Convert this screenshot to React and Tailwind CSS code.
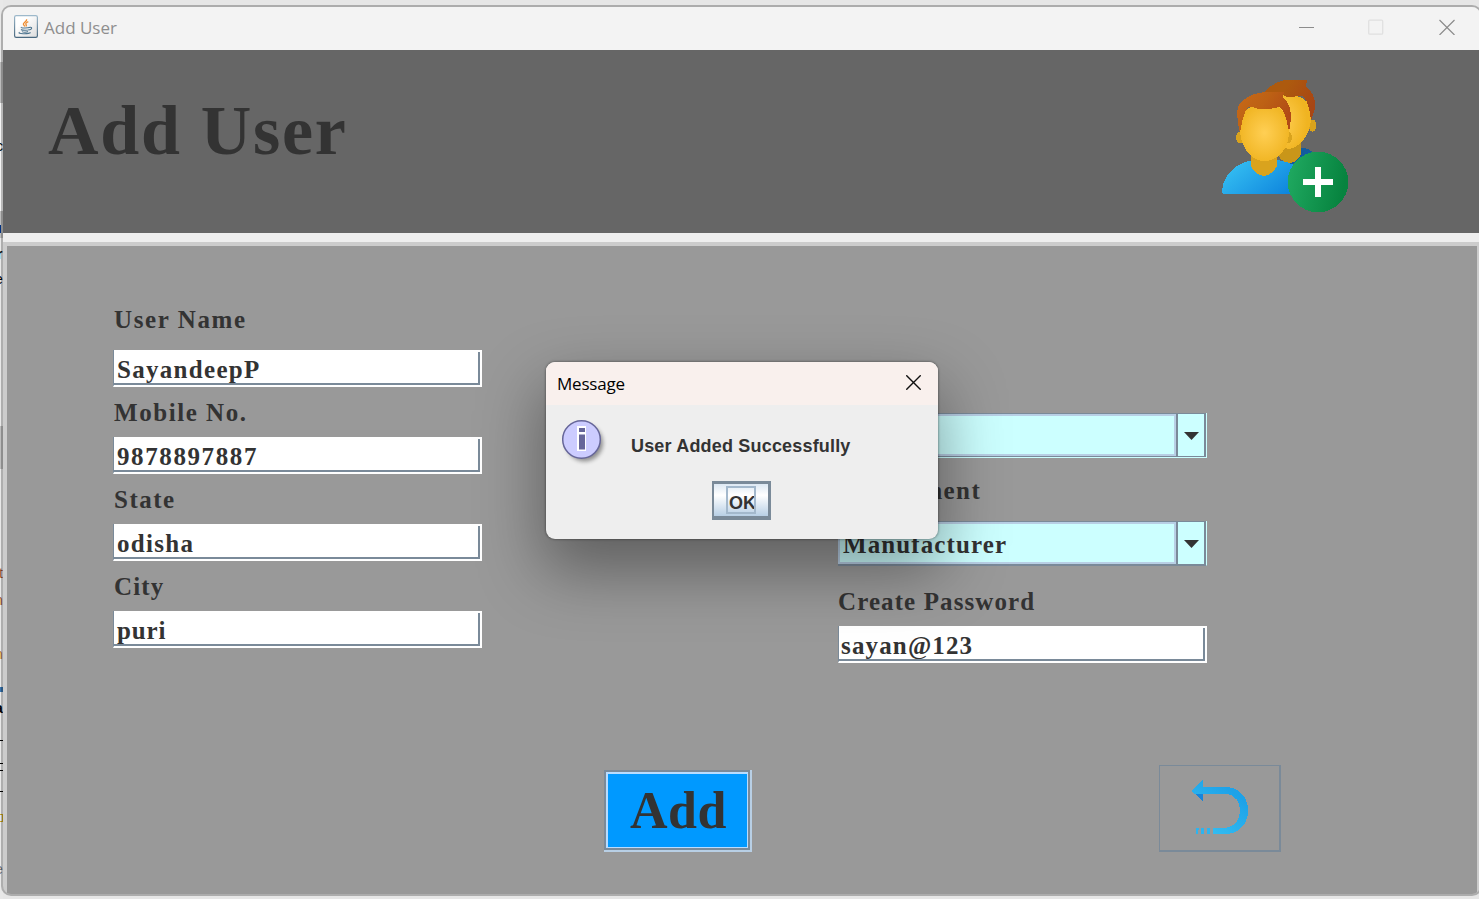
import React from "react";

function JavaIcon() {
  return (
    <svg width="24" height="23" viewBox="0 0 24 23" fill="none">
      <defs>
        <linearGradient id="jb" x1="0" y1="0" x2="0" y2="1">
          <stop offset="0" stopColor="#9db9cb" />
          <stop offset="1" stopColor="#4a6980" />
        </linearGradient>
        <linearGradient id="jf" x1="0" y1="0" x2="1" y2="1">
          <stop offset="0.3" stopColor="#ffffff" />
          <stop offset="1" stopColor="#dcdcdc" />
        </linearGradient>
      </defs>
      <rect x="0.6" y="0.6" width="22.8" height="21.8" rx="1.6" fill="url(#jf)" stroke="url(#jb)" strokeWidth="1.2" />
      <path d="M12.6 4.2c.8 2-3.2 3.200-3.200 4.900 0 1 1.200 1.600 1.600 2.500M14.300 6.700c-1.700.7-2.900 1.500-2.400 2.600.3.800.9 1.100.1 2.100" stroke="#ee8a2c" strokeWidth="1.3" />
      <path d="M7.500 12.300c-2 .7 6.500 1 8.400 0M7 14.500c1 1 7 1 8.300.1M8 16.600c1.200.8 4.600.8 6 0M15.700 12.400c3-.6 2.200 2.200-.4 2.500M5.600 17.300c-3.200 1.600 8.900 2.100 11 .2" stroke="#4f7690" strokeWidth="1.1" />
    </svg>
  );
}

function UsersIcon() {
  return (
    <svg width="128" height="134" viewBox="0 0 128 134" shapeRendering="crispEdges">
      <defs>
        <radialGradient id="face" cx="0.5" cy="0.5" r="0.55">
          <stop offset="0" stopColor="#ffcf54" />
          <stop offset="1" stopColor="#f0b421" />
        </radialGradient>
        <radialGradient id="face2" cx="0.3" cy="0.5" r="0.6">
          <stop offset="0" stopColor="#ffcf54" />
          <stop offset="1" stopColor="#f0b421" />
        </radialGradient>
        <linearGradient id="hair" x1="0" y1="0" x2="1" y2="0.5">
          <stop offset="0" stopColor="#c76918" />
          <stop offset="0.5" stopColor="#bd6114" />
          <stop offset="1" stopColor="#b14a16" />
        </linearGradient>
        <linearGradient id="hair2" x1="0" y1="0" x2="1" y2="0.5">
          <stop offset="0.4" stopColor="#ad5a0e" />
          <stop offset="1" stopColor="#a84614" />
        </linearGradient>
        <linearGradient id="shirt" x1="0" y1="0.3" x2="1" y2="0.8">
          <stop offset="0" stopColor="#35bff2" />
          <stop offset="1" stopColor="#0b80db" />
        </linearGradient>
        <linearGradient id="plus" x1="0" y1="0" x2="1" y2="0.2">
          <stop offset="0" stopColor="#21ab62" />
          <stop offset="1" stopColor="#07833f" />
        </linearGradient>
      </defs>
      <path d="M68 72C76 64 86 68 92 73L96 80L80 100H66Z" fill="#125b9e" />
      <path d="M56 60h23v14c-2 6-7 9-12 9-7-1-11-6-12-11Z" fill="#c99619" />
      <ellipse cx="90.500" cy="45.500" rx="4" ry="6" fill="#d9a31d" />
      <path d="M47 20C53 10 84 12 89 28C91 48 83 66 67 69C52 68 45 44 47 20Z" fill="url(#face2)" />
      <path d="M43 12C47 5 56 2 62 0H85L84 6C90 11 94 19 93 29L89 41C88 30 85 17 79 15.500C71 17 65 18 61 15Z" fill="url(#hair2)" />
      <path d="M0 110C2 92 17 82 31 80H56C66 82 77 85 82 94L80 114H2C0 114 0 112 0 110Z" fill="url(#shirt)" />
      <path d="M29 72H55V86C52 92 48 95 42 96C35 95 31 91 29 86Z" fill="#d9a31e" />
      <ellipse cx="18" cy="57.500" rx="4" ry="6" fill="#d9a31d" />
      <ellipse cx="66" cy="57.500" rx="4" ry="6" fill="#d9a31d" />
      <path d="M18 45C20 31 27 23 42 25C57 22 65 32 67 49C68 67 57 81 42 81C27 81 17 64 18 45Z" fill="url(#face)" />
      <path d="M18 53C15 43 14 30 17 24C22 18 29 16 32 14L42 12H62L61 17C68 23 69 32 69 39L67 52C65 41 62 28 57 27C51 29 37 31 31 27L26 27C21 34 20 42 18 53Z" fill="url(#hair)" />
      <circle cx="96" cy="102" r="30.300" fill="url(#plus)" />
      <path d="M93 87h6v12h12v6H99v12h-6v-12H81v-6h12Z" fill="#fff" />
    </svg>
  );
}

function BackIcon() {
  return (
    <svg width="58" height="56" viewBox="0 0 58 56" shapeRendering="crispEdges">
      <defs>
        <linearGradient id="bk" gradientUnits="userSpaceOnUse" x1="10" y1="52" x2="40" y2="12">
          <stop offset="0" stopColor="#35bff2" />
          <stop offset="1" stopColor="#1ea2e8" />
        </linearGradient>
      </defs>
      <path d="M5 15H12V23Z" fill="#1585dc" />
      <path d="M0 12L12 0V8H36C49 9 57 19 57 31.500C57 44 49 54 36 55H22V48.500H36C44 47 49 41 49 31.500C49 23 44 16 36 15H4Z" fill="url(#bk)" />
      <path d="M5 48.500h3v2h-1v4.500H5ZM10 48.500h3V55h-3ZM16 48.500h3V55h-3Z" fill="#2cb4ef" />
    </svg>
  );
}

function InfoIcon() {
  return (
    <svg width="48" height="48" viewBox="0 0 48 48">
      <defs>
        <filter id="soft" x="-20%" y="-20%" width="150%" height="150%">
          <feGaussianBlur stdDeviation="2" />
        </filter>
      </defs>
      <circle cx="23.500" cy="24" r="18.500" fill="#000" opacity="0.4" filter="url(#soft)" />
      <circle cx="20.500" cy="20.500" r="18.800" fill="#ccccff" stroke="#666699" strokeWidth="1.500" />
      <path d="M16 7h9v25h-9Z" fill="#fff" />
      <path d="M18 9h6v4h-6ZM18 15.500h6v15h-6Z" fill="#666699" />
    </svg>
  );
}

function Label({ children, className }) {
  return (
    <div className={"flex items-center whitespace-nowrap text-[25px] leading-none text-[#333] " + className}>
      {children}
    </div>
  );
}

function Field({ children, spacing }) {
  return (
    <div className="h-[37px] w-[369px] border-b-2 border-l border-r-2 border-b-white border-l-[#7a8a99] border-r-white bg-white pt-0.5">
      <div className="flex h-[33px] items-center overflow-hidden border-b-2 border-r-2 border-[#7a8a99] pl-[3px] pt-[3px]">
        <span className={"whitespace-nowrap text-[25px] leading-none text-[#333] " + spacing}>{children}</span>
      </div>
    </div>
  );
}

function Combo({ children, edge }) {
  return (
    <div className={"flex h-[45px] w-[369px] border-b border-r border-r-[#ccffff] " + edge}>
      <div className="flex grow border-b border-r-2 border-t border-[#7a8a99] bg-[#ccffff]">
        <div className="flex grow items-center border-2 border-[#b8cfe5] pl-[3px] pt-[3px] text-[25px] leading-none tracking-[1.100px] text-[#333]">
          {children}
        </div>
        <div className="flex w-[28px] items-center justify-center border-l-2 border-[#7a8a99] pt-px">
          <svg width="15" height="8" viewBox="0 0 15 8">
            <path d="M0 0H15L7.500 8Z" fill="#333" />
          </svg>
        </div>
      </div>
    </div>
  );
}

function Backdrop() {
  return (
    <div className="flex h-full w-[3px] shrink-0 flex-col overflow-hidden bg-[#e8e8e8] font-['Liberation_Sans'] text-[14px] font-normal leading-none">
      <div className="mt-[62px] h-[41px] shrink-0 bg-[#bdbdbd]" />
      <div className="h-[108px] shrink-0 bg-[#f4f4f4] pt-[36px]"><span className="-ml-1 text-black">c</span></div>
      <div className="h-[27px] shrink-0 bg-[#bdbdbd] pt-[14px]"><div className="h-2 w-px bg-[#003080]" /></div>
      <div className="h-[28px] shrink-0 pt-[9px]"><span className="-ml-[3px] font-bold text-black">r</span></div>
      <div className="h-[160px] shrink-0 pt-[6px]"><span className="-ml-[5px] text-black">e</span></div>
      <div className="h-[43px] shrink-0 bg-[#bdbdbd]" />
      <div className="h-[97px] shrink-0" />
      <div className="h-[27px] shrink-0"><span className="-ml-px text-[#a2562e]">t</span></div>
      <div className="h-[54px] shrink-0"><span className="-ml-[5px] text-[#a2562e]">n</span></div>
      <div className="h-[40px] shrink-0"><span className="-ml-[5px] text-[#b8742c]">n</span></div>
      <div className="h-[5px] shrink-0 bg-[#3974ae]" />
      <div className="h-[48px] shrink-0 pt-[9px]"><span className="-ml-[5px] font-bold text-black">a</span></div>
      <div className="h-px shrink-0 bg-black" />
      <div className="mt-[22px] h-px shrink-0 bg-black" />
      <div className="mt-[6px] h-px shrink-0 bg-black" />
      <div className="mt-[20px] h-px shrink-0 bg-black" />
      <div className="mt-[22px] h-[8px] w-[3px] shrink-0 border-y border-r border-[#c9a51e]" />
      <div className="mt-[40px] shrink-0"><span className="-ml-[5px] text-[#777]">e</span></div>
    </div>
  );
}

function MessageDialog() {
  return (
    <div className="absolute left-[546px] top-[362px] h-[177px] w-[392px] rounded-[9px] bg-[#eee] shadow-[0_0_2px_1px_rgba(0,0,0,0.25),0_28px_64px_4px_rgba(0,0,0,0.38)]">
      <div className="flex h-[43px] items-center justify-between rounded-t-[9px] bg-[#f9f0ed] pl-[11px] pr-[17px]">
        <span className="font-['Open_Sans',sans-serif] text-[17px] font-normal leading-none tracking-[-0.200px] text-black">Message</span>
        <svg width="15" height="15" viewBox="0 0 15 15" className="-mt-[3px]">
          <path d="M0.300 0.300L14.700 14.700M14.700 0.300L0.300 14.700" stroke="#111" strokeWidth="1.400" />
        </svg>
      </div>
      <div className="flex h-[76px] pl-[15px] pt-[14px]">
        <InfoIcon />
        <span className="ml-[22px] mt-[18px] whitespace-nowrap font-['Liberation_Sans',sans-serif] text-[18px] font-bold leading-none tracking-[0.180px] text-[#333]">
          User Added Successfully
        </span>
      </div>
      <div className="flex pl-[166px]">
        <button className="flex h-[39px] w-[59px] border-b-4 border-l-2 border-r-[3px] border-t-[3px] border-[#7a8a99] bg-linear-to-b from-[#dde8f3] via-white via-35% to-[#b8cfe5] pl-3 pt-[2px]">
          <span className="flex h-[28px] w-[30px] items-center overflow-hidden border-2 border-[#a3b8cc] pl-px pt-[5px] font-['Liberation_Sans',sans-serif] text-[18px] font-bold leading-none text-[#333]">
            OK
          </span>
        </button>
      </div>
    </div>
  );
}

export default function App() {
  return (
    <div className="relative flex h-[899px] w-[1479px] overflow-hidden bg-[#e6e6e6] font-['Liberation_Serif',serif] font-bold">
      <Backdrop />
      <div className="-ml-[2px] mt-[5px] flex h-[891px] w-[1481px] shrink-0 flex-col overflow-hidden rounded-[10px] border-2 border-black/25 bg-[#ccc] bg-clip-padding">
        <div className="flex h-[43px] shrink-0 items-center bg-[#f3f3f3] pl-[11px] font-['Open_Sans',sans-serif] font-normal">
          <div className="-mt-1"><JavaIcon /></div>
          <span className="-mt-[3px] ml-[6px] text-[17px] leading-none text-[#8e8e8e]">Add User</span>
          <svg width="156" height="16" viewBox="0 0 156 16" className="-mt-[3px] ml-auto mr-[25px]" fill="none">
            <path d="M0 8.500H15" stroke="#8c8c8c" />
            <rect x="69.700" y="1.200" width="14" height="14" rx="1" stroke="#e0e0e0" strokeWidth="1.300" />
            <path d="M140.500 1L155.500 16M155.500 1L140.500 16" stroke="#8c8c8c" strokeWidth="1.200" />
          </svg>
        </div>
        <div className="flex h-[183px] shrink-0 justify-between bg-[#666] pl-[45px] pr-[130px]">
          <h1 className="mt-[46px] text-[70px] leading-[70px] tracking-[1.700px] text-[#333]">Add User</h1>
          <div className="mt-[30px]"><UsersIcon /></div>
        </div>
        <div className="h-[9px] shrink-0 bg-[#eee]" />
        <div className="flex grow flex-col border-l-4 border-r-[3px] border-t-4 border-[#ccc] bg-[#999]">
          <div className="flex h-[519px] shrink-0 pl-[106px]">
            <div className="flex w-[725px] flex-col pt-[44px]">
              <Label className="h-[60px] pb-0.5 pl-px tracking-[1.600px]">User Name</Label>
              <Field spacing="tracking-[1.300px]">SayandeepP</Field>
              <Label className="h-[50px] pl-px tracking-[1.550px]">Mobile No.</Label>
              <Field spacing="tracking-[1.600px]">9878897887</Field>
              <Label className="h-[50px] pl-px tracking-[1.500px]">State</Label>
              <Field spacing="tracking-[1.300px]">odisha</Field>
              <Label className="h-[50px] pl-px tracking-[1.100px]">City</Label>
              <Field spacing="tracking-[0.900px]">puri</Field>
            </div>
            <div className="flex flex-col pt-[167px]">
              <Combo edge="border-b-[#ccffff]" />
              <Label className="h-[63px] pt-0.5 tracking-[1.400px]">Department</Label>
              <Combo edge="border-b-[#7a8a99]">Manufacturer</Combo>
              <Label className="h-[60px] pt-[11px] tracking-[1.100px]">Create Password</Label>
              <Field spacing="-ml-px tracking-[1.150px]">sayan@123</Field>
            </div>
          </div>
          <div className="flex items-start pl-[597px]">
            <button className="mt-[5px] h-[82px] w-[148px] border-b-2 border-r-2 border-[#b8cfe5]">
              <span className="flex h-[80px] w-[146px] items-center justify-center border-2 border-[#7a8a99] bg-[#b8dcff] p-[2px] pb-px pr-px">
                <span className="flex h-full w-full items-center justify-center bg-[#0099ff] pl-[2px] pt-px text-[52px] leading-none tracking-[0.500px] text-[#333]">
                  Add
                </span>
              </span>
            </button>
            <button className="ml-[407px] flex h-[87px] w-[122px] border-b-2 border-l border-r-2 border-t border-[#7a8a99] pl-[31px] pt-[13px]">
              <BackIcon />
            </button>
          </div>
        </div>
      </div>
      <MessageDialog />
    </div>
  );
}
